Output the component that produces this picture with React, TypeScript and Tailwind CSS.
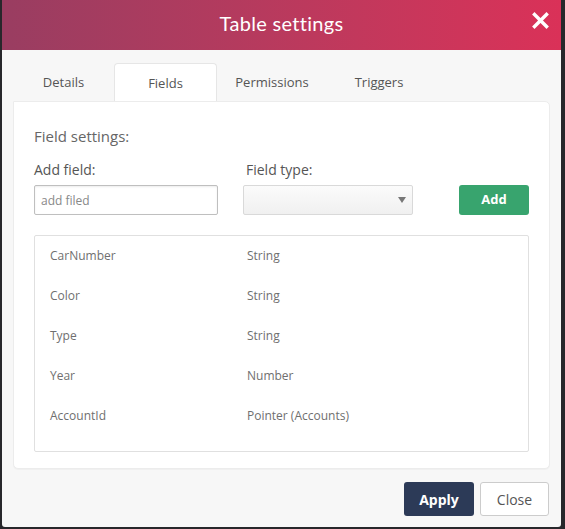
import React from "react";

const fields = [
  { name: "CarNumber", type: "String" },
  { name: "Color", type: "String" },
  { name: "Type", type: "String" },
  { name: "Year", type: "Number" },
  { name: "AccountId", type: "Pointer (Accounts)" },
];

const tabs = [
  { label: "Details", w: "w-[101px]" },
  { label: "Fields", w: "w-[103px]" },
  { label: "Permissions", w: "w-[110px]" },
  { label: "Triggers", w: "w-[104px]" },
];

export default function App() {
  return (
    <div className="w-[565px] h-[529px] bg-[#27272b] pl-[2px] font-['Open_Sans',sans-serif]">
      <div className="w-[559px] h-[527px] bg-[#f7f7f7] rounded-b-[3px] flex flex-col overflow-hidden">
        {/* header */}
        <div className="relative h-[50px] shrink-0 flex items-center justify-center bg-gradient-to-r from-[#993d61] to-[#da3158]">
          <span className="text-white text-[20px] font-['Lato',sans-serif] tracking-[0.3px] -mt-[4px]">Table settings</span>
          <button className="absolute right-[12px] top-[12px] text-white">
            <svg width="17" height="17" viewBox="0 0 17 17">
              <path d="M2.5 2.5 L14.5 14.5 M14.5 2.5 L2.5 14.5" stroke="white" strokeWidth="3.4" strokeLinecap="square" />
            </svg>
          </button>
        </div>

        <div className="flex-1 flex flex-col px-[11px] pt-[13px] pb-[11px]">
          {/* tabs */}
          <div className="flex h-[38px] shrink-0 text-[13px] text-[#555]">
            {tabs.map((t) =>
              t.label === "Fields" ? (
                <div
                  key={t.label}
                  className={`${t.w} bg-white border border-b-0 border-[#e6e6e6] rounded-t-[4px] flex items-center justify-center pt-[3px]`}
                >
                  {t.label}
                </div>
              ) : (
                <div key={t.label} className={`${t.w} flex items-center justify-center pt-[1px]`}>
                  {t.label}
                </div>
              )
            )}
          </div>

          {/* panel */}
          <div className="h-[368px] bg-white border border-[#ececec] rounded-b-[5px] rounded-tr-[5px] px-[20px] pt-[24px] shadow-[0_1px_1px_rgba(0,0,0,0.03)]">
            <div className="text-[15px] text-[#666] leading-[20px]">Field settings:</div>

            <div className="flex items-end mt-[15px]">
              <div className="flex flex-col w-[184px]">
                <label className="text-[14px] text-[#555] leading-[18px] mb-[6px]">Add field:</label>
                <input
                  placeholder="add filed"
                  className="h-[30px] border border-[#bfbfbf] rounded-[2px] px-[6px] text-[12px] text-[#555] placeholder:text-[#888] shadow-[inset_0_1px_2px_rgba(0,0,0,0.08)] outline-none"
                />
              </div>
              <div className="flex flex-col w-[170px] ml-[25px]">
                <label className="text-[14px] text-[#555] leading-[18px] mb-[6px] pl-[3px]">Field type:</label>
                <div className="h-[30px] border border-[#d9d9d9] rounded-[2px] bg-gradient-to-b from-[#fbfbfb] to-[#f0f0f0] flex items-center justify-end pr-[6px]">
                  <svg width="8" height="6" viewBox="0 0 8 6">
                    <path d="M0 0 H8 L4 6 Z" fill="#777" />
                  </svg>
                </div>
              </div>
              <button className="ml-auto w-[70px] h-[30px] bg-[#38a46e] rounded-[3px] text-white text-[13px] font-bold">
                Add
              </button>
            </div>

            <div className="mt-[20px] h-[217px] border border-[#e0e0e0] rounded-[2px] pt-[11px] px-[15px]">
              {fields.map((f) => (
                <div key={f.name} className="flex h-[40px] text-[12px] text-[#6f6f6f] leading-[18px]">
                  <div className="w-[197px]">{f.name}</div>
                  <div>{f.type}</div>
                </div>
              ))}
            </div>
          </div>

          {/* footer */}
          <div className="flex justify-end gap-[6px] mt-auto pr-[1px]">
            <button className="w-[70px] h-[34px] bg-[#2c3a57] rounded-[3px] text-white text-[14px] font-bold">Apply</button>
            <button className="w-[69px] h-[34px] bg-white border border-[#cccccc] rounded-[3px] text-[#555] text-[14px]">Close</button>
          </div>
        </div>
      </div>
    </div>
  );
}
